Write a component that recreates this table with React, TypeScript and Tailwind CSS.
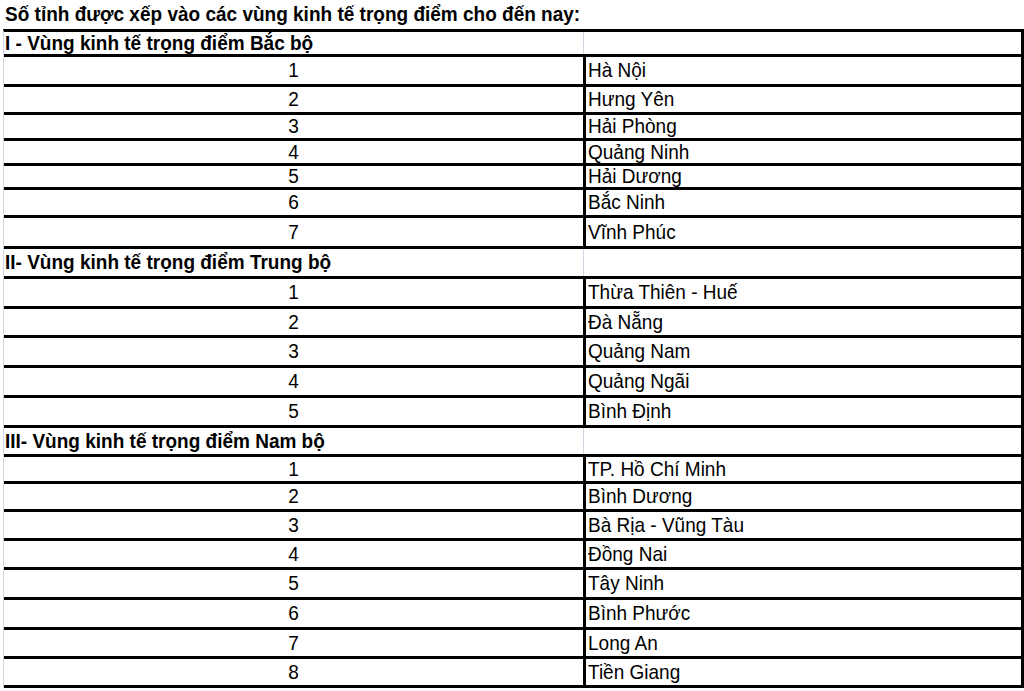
type Row = { kind: 'section'; label: string; h: number } | { kind: 'item'; no: number; name: string; h: number };

const rows: Row[] = [
  { kind: 'section', label: 'I - Vùng kinh tế trọng điểm Bắc bộ', h: 25 },
  { kind: 'item', no: 1, name: 'Hà Nội', h: 30 },
  { kind: 'item', no: 2, name: 'Hưng Yên', h: 28 },
  { kind: 'item', no: 3, name: 'Hải Phòng', h: 26 },
  { kind: 'item', no: 4, name: 'Quảng Ninh', h: 25 },
  { kind: 'item', no: 5, name: 'Hải Dương', h: 24 },
  { kind: 'item', no: 6, name: 'Bắc Ninh', h: 28 },
  { kind: 'item', no: 7, name: 'Vĩnh Phúc', h: 31 },
  { kind: 'section', label: 'II- Vùng kinh tế trọng điểm Trung bộ', h: 30 },
  { kind: 'item', no: 1, name: 'Thừa Thiên - Huế', h: 30 },
  { kind: 'item', no: 2, name: 'Đà Nẵng', h: 29 },
  { kind: 'item', no: 3, name: 'Quảng Nam', h: 30 },
  { kind: 'item', no: 4, name: 'Quảng Ngãi', h: 30 },
  { kind: 'item', no: 5, name: 'Bình Định', h: 30 },
  { kind: 'section', label: 'III- Vùng kinh tế trọng điểm Nam bộ', h: 29 },
  { kind: 'item', no: 1, name: 'TP. Hồ Chí Minh', h: 27 },
  { kind: 'item', no: 2, name: 'Bình Dương', h: 28 },
  { kind: 'item', no: 3, name: 'Bà Rịa - Vũng Tàu', h: 29 },
  { kind: 'item', no: 4, name: 'Đồng Nai', h: 29 },
  { kind: 'item', no: 5, name: 'Tây Ninh', h: 30 },
  { kind: 'item', no: 6, name: 'Bình Phước', h: 30 },
  { kind: 'item', no: 7, name: 'Long An', h: 29 },
  { kind: 'item', no: 8, name: 'Tiền Giang', h: 29 },
];

// cell text in the sheet is drawn slightly taller than it is wide
const tall = 'inline-block scale-y-110';

export default function App() {
  return (
    <div className="w-[1024px] h-[691px] bg-white text-black text-[19px] leading-none font-['Liberation_Sans',Arial,sans-serif] overflow-hidden">
      <div className="h-[29px] flex items-center pl-[5px] pb-[2px] font-bold">
        <span className={tall}>Số tỉnh được xếp vào các vùng kinh tế trọng điểm cho đến nay:</span>
      </div>
      <div className="ml-[3px] border-l border-[#d0d7e5] border-t-[3px] border-t-black border-r-[3px] border-r-black">
        {rows.map((r, i) =>
          r.kind === 'section' ? (
            <div key={i} className="grid grid-cols-[580px_1fr] border-b-[3px] border-black" style={{ height: r.h }}>
              <div className="flex items-center pl-[1px] pb-[2px] font-bold whitespace-nowrap border-r border-[#d0d7e5]">
                <span className={tall}>{r.label}</span>
              </div>
              <div />
            </div>
          ) : (
            <div key={i} className="grid grid-cols-[582px_1fr] border-b-[3px] border-black" style={{ height: r.h }}>
              <div className="flex items-center justify-center pb-[2px] border-r-[3px] border-black">
                <span className={tall}>{r.no}</span>
              </div>
              <div className="flex items-center pl-[2px] pb-[2px] whitespace-nowrap">
                <span className={tall}>{r.name}</span>
              </div>
            </div>
          )
        )}
      </div>
    </div>
  );
}
